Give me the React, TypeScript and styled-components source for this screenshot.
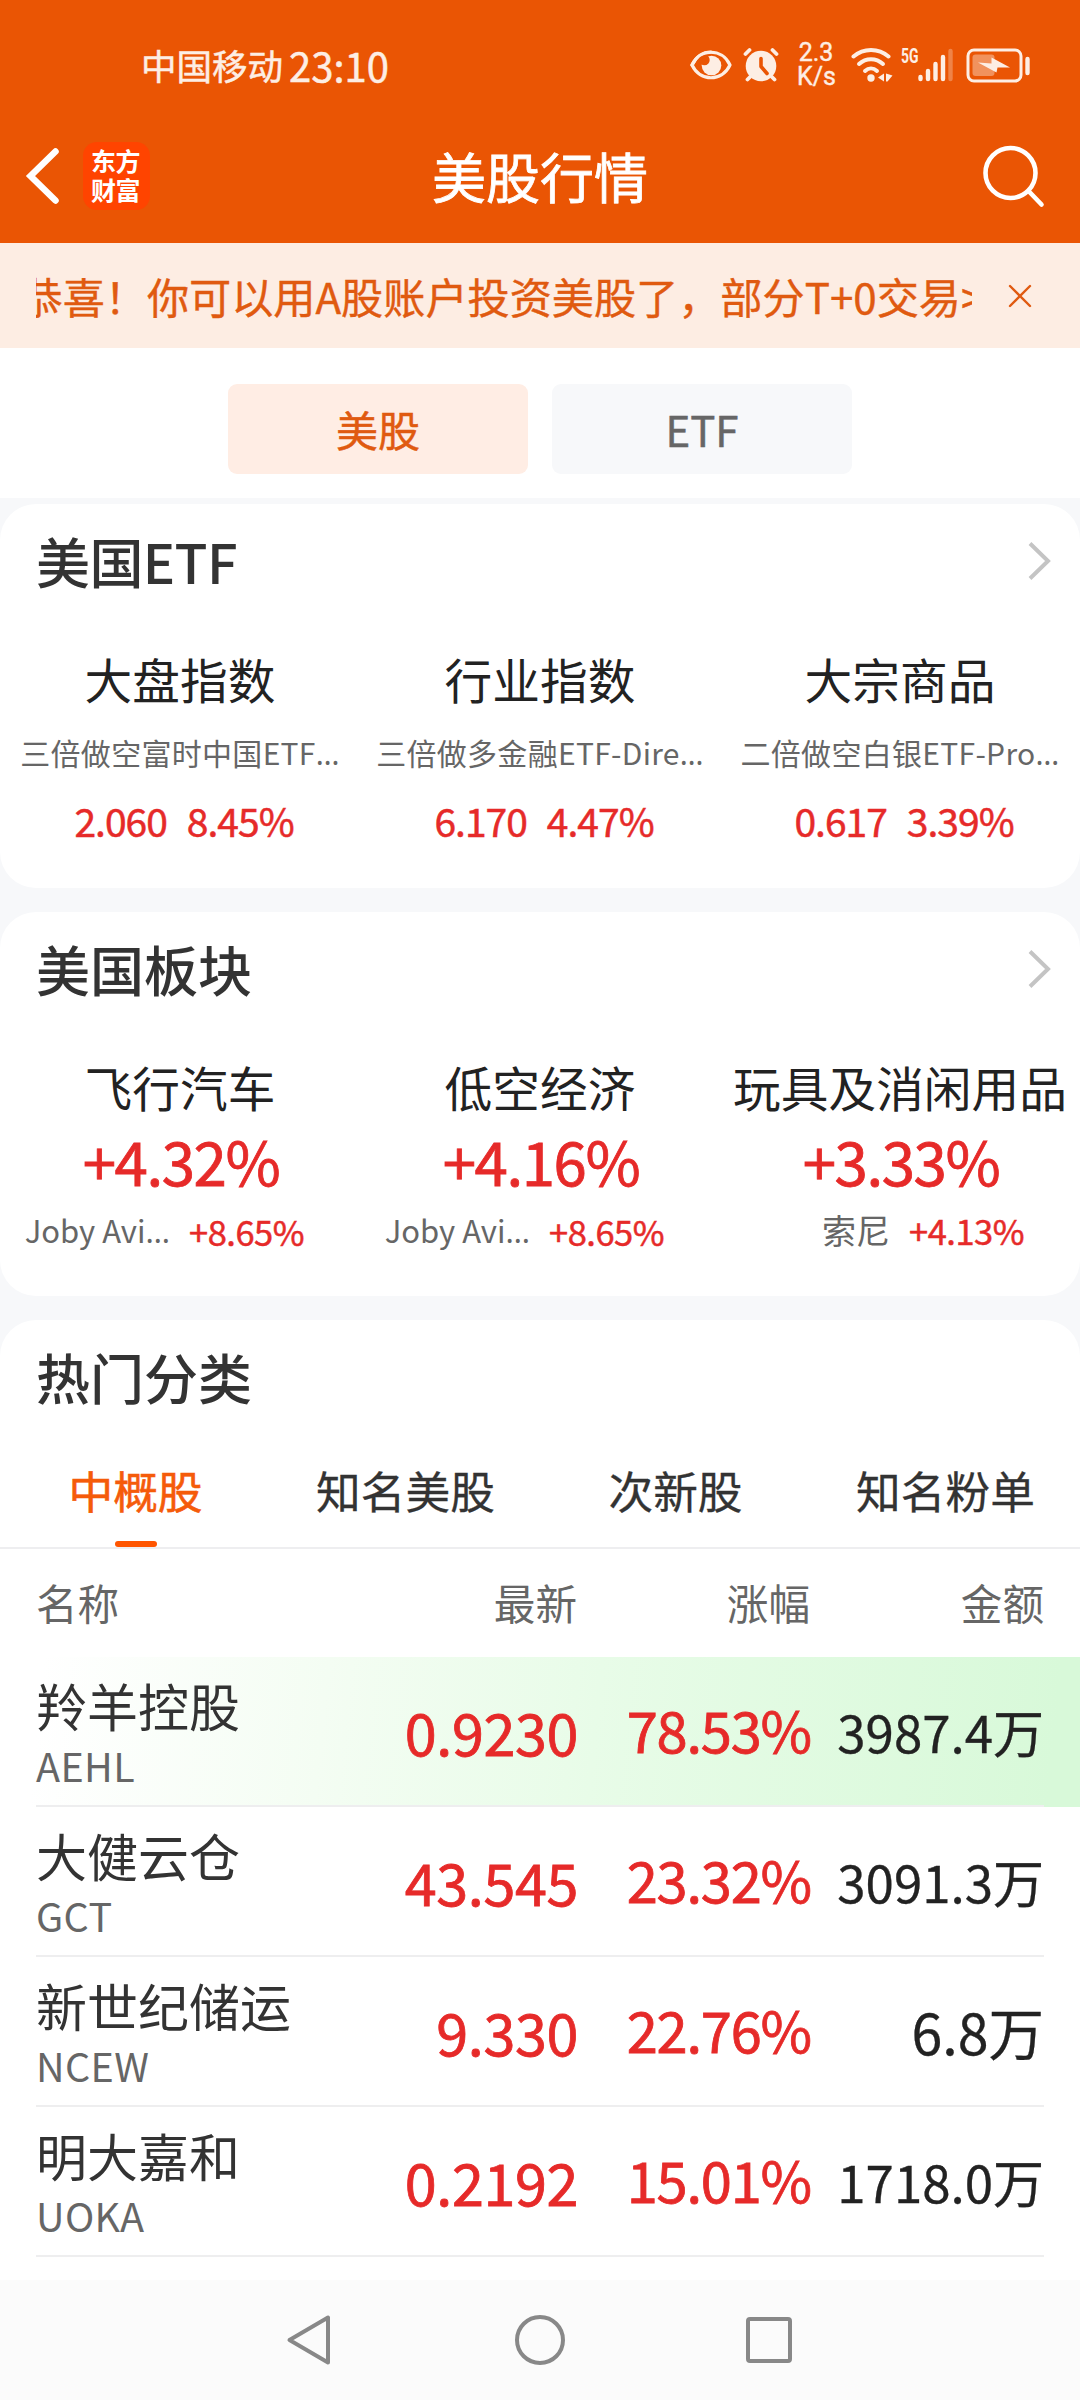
import React from "react";
import styled, { createGlobalStyle } from "styled-components";

const RED = "#e62a29";
const ICON = "#fdeee4";
const ORANGE = "#ea5504";

const Global = createGlobalStyle`
  * { box-sizing: border-box; }
  body {
    margin: 0;
    background: #f7f8fa;
    font-family: "Noto Sans CJK SC", "Noto Sans", sans-serif;
    color: #333;
  }
`;

const Screen = styled.div`
  width: 1080px;
  height: 2400px;
  overflow: hidden;
  display: flex;
  flex-direction: column;
`;

const Header = styled.header`
  height: 243px;
  flex: none;
  background: ${ORANGE};
  color: #fff;
`;

const StatusBar = styled.div`
  height: 127px;
  padding: 3px 49px 0 141px;
  display: flex;
  align-items: center;
  justify-content: space-between;
`;

const Carrier = styled.div`
  display: flex;
  align-items: center;
  gap: 6px;
  font-size: 35.5px;
  line-height: 40px;
  -webkit-text-stroke: 0.5px ${ICON};
  color: ${ICON};
`;

const Clock = styled.span`
  font-size: 40px;
`;

const StatusIcons = styled.div`
  display: flex;
  align-items: center;
  height: 50px;
`;

const StatusIcon = styled.svg<{ $gap: number }>`
  flex: none;
  display: block;
  margin-left: ${(p) => p.$gap}px;
`;

const Speed = styled.div`
  width: 38px;
  margin-left: 18px;
  font-family: Roboto, sans-serif;
  font-size: 25px;
  line-height: 24px;
  text-align: center;
  -webkit-text-stroke: 0.4px ${ICON};
  color: ${ICON};
`;

const NavRow = styled.div`
  height: 97px;
  padding: 0 35px 0 25px;
  display: grid;
  grid-template-columns: 1fr auto 1fr;
  align-items: center;
`;

const NavLeft = styled.div`
  display: flex;
  align-items: center;
  gap: 22px;
`;

const Logo = styled.div`
  width: 67px;
  height: 68px;
  padding: 4px 8px 0 8px;
  border-radius: 14px;
  background: #ff4400;
  font-size: 25px;
  font-weight: 700;
  line-height: 29px;
  letter-spacing: -0.4px;
`;

const PageTitle = styled.h1`
  margin: 0 -10px 0 0;
  font-size: 54px;
  font-weight: 400;
  line-height: 60px;
  -webkit-text-stroke: 0.8px #fff;
`;

const NavRight = styled.div`
  display: flex;
  justify-content: flex-end;
`;

const Notice = styled.div`
  height: 105px;
  flex: none;
  padding: 0 47px 0 36px;
  display: flex;
  align-items: center;
  justify-content: space-between;
  background: #fdede3;
`;

const Marquee = styled.div`
  width: 936px;
  overflow: hidden;
  white-space: nowrap;
  font-size: 42.15px;
  line-height: 64px;
  text-indent: -15.5px;
  -webkit-text-stroke: 0.4px #e05a10;
  color: #e05a10;
`;

const Segments = styled.div`
  height: 150px;
  flex: none;
  display: flex;
  justify-content: center;
  gap: 24px;
  padding-top: 36px;
  background: #fff;
`;

const Segment = styled.button<{ $active?: boolean }>`
  width: 300px;
  height: 90px;
  padding: 0;
  border: 0;
  border-radius: 9px;
  background: ${(p) => (p.$active ? "#ffede4" : "#f7f8fa")};
  color: ${(p) => (p.$active ? "#e05a10" : "#666")};
  font: 400 42px/90px "Noto Sans CJK SC", sans-serif;
  -webkit-text-stroke: 0.5px currentColor;
`;

const Card = styled.section<{ $top: number }>`
  height: 384px;
  flex: none;
  margin-top: ${(p) => p.$top}px;
  border-radius: 36px;
  background: #fff;
`;

const ListCard = styled(Card)`
  height: 960px;
  border-radius: 36px 36px 0 0;
`;

const CardHead = styled.div`
  height: 114px;
  padding: 0 29px 0 36px;
  display: flex;
  align-items: center;
  justify-content: space-between;
`;

const CardTitle = styled.h2<{ $tracking?: number }>`
  margin: 0;
  font-size: 54px;
  font-weight: 500;
  line-height: 60px;
  letter-spacing: ${(p) => p.$tracking ?? 0}px;
`;

const Columns = styled.div`
  display: grid;
  grid-template-columns: repeat(3, 360px);
`;

const Column = styled.div`
  display: flex;
  flex-direction: column;
  align-items: center;
  white-space: nowrap;
`;

const ColumnName = styled.div`
  margin-top: 30px;
  font-size: 47.7px;
  line-height: 62px;
  color: #222;
`;

const FundName = styled.div`
  margin-top: 20px;
  font-size: 30px;
  line-height: 44px;
  letter-spacing: 0.3px;
  color: #666;
`;

const Dots = styled.span`
  font-family: "Noto Sans", sans-serif;
`;

const FundQuote = styled.div`
  margin-top: 17px;
  padding-left: 8px;
  display: flex;
  gap: 20px;
  font-size: 39px;
  line-height: 54px;
  letter-spacing: -1px;
  -webkit-text-stroke: 0.5px ${RED};
  color: ${RED};
`;

const SectorChange = styled.div`
  margin-top: 7px;
  padding-left: 2px;
  font-size: 60px;
  line-height: 70px;
  letter-spacing: -1.4px;
  -webkit-text-stroke: 0.8px ${RED};
  color: ${RED};
`;

const Leader = styled.div`
  width: 360px;
  margin-top: 11px;
  display: grid;
  grid-template-columns: 170px 1fr;
  column-gap: 19px;
  align-items: center;
  line-height: 48px;
`;

const LeaderName = styled.span<{ $size: number }>`
  font-size: ${(p) => p.$size}px;
  text-align: right;
  color: #666;
`;

const LeaderChange = styled.span`
  font-size: 34.5px;
  letter-spacing: -0.5px;
  -webkit-text-stroke: 0.5px ${RED};
  color: ${RED};
`;

const Tabs = styled.div`
  height: 115px;
  display: grid;
  grid-template-columns: repeat(4, 270px);
  border-bottom: 2px solid #eeeef0;
`;

const Tab = styled.div<{ $active?: boolean }>`
  display: flex;
  flex-direction: column;
  align-items: center;
  justify-content: space-between;
  padding-top: 24px;
  padding-left: 1px;
  font-size: 44.7px;
  line-height: 64px;
  -webkit-text-stroke: ${(p) => (p.$active ? 0.6 : 0.3)}px currentColor;
  color: ${(p) => (p.$active ? "#f55b0a" : "#333")};
  &::after {
    content: "";
    width: 42px;
    height: 6px;
    border-radius: 3px;
    background: ${(p) => (p.$active ? "#ff5500" : "transparent")};
  }
`;

const Row = styled.div<{ $flash?: boolean }>`
  height: 150px;
  padding: 0 36px;
  background: ${(p) =>
    p.$flash ? "linear-gradient(96deg, #fff 4%, #f4fdf3 30%, #e8fce8 55%, #d8f9d9 97%)" : "#fff"};
`;

const RowGrid = styled.div`
  height: 150px;
  display: grid;
  grid-template-columns: 300px 242px 233px 1fr;
  align-items: center;
  border-bottom: 2px solid #eeeeef;
  white-space: nowrap;
`;

const HeadRow = styled.div`
  height: 108px;
  padding: 0 36px 3px;
  display: grid;
  grid-template-columns: 300px 241px 233px 1fr;
  align-items: center;
  font-size: 41.6px;
  line-height: 60px;
  color: #666;
`;

const HeadCell = styled.div<{ $left?: boolean }>`
  text-align: ${(p) => (p.$left ? "left" : "right")};
`;

const StockCell = styled.div`
  padding-top: 7px;
`;

const StockName = styled.div`
  font-size: 51px;
  line-height: 61px;
`;

const StockCode = styled.div`
  font-size: 39.5px;
  line-height: 58px;
  letter-spacing: 0.4px;
  color: #666;
`;

const Price = styled.div`
  text-align: right;
  font-size: 57.5px;
  line-height: 70px;
  letter-spacing: -0.4px;
  -webkit-text-stroke: 0.8px currentColor;
  color: ${RED};
`;

const Change = styled(Price)`
  padding-bottom: 5px;
  font-size: 56px;
  letter-spacing: -1.2px;
`;

const Amount = styled(Price)<{ $size: number }>`
  font-size: ${(p) => p.$size}px;
  letter-spacing: 0;
  -webkit-text-stroke: 0.3px currentColor;
  color: #222;
`;

const SystemNav = styled.nav`
  height: 120px;
  flex: none;
  padding: 0 287px 0 286px;
  display: flex;
  align-items: center;
  justify-content: space-between;
  background: #fbfbfb;
`;

const Chevron = () => (
  <svg width="24" height="40" viewBox="0 0 24 40" fill="none" stroke="#c4c4c4" strokeWidth="4">
    <path d="M3 2.500 21 20 3 37.500" />
  </svg>
);

const EyeIcon = () => (
  <StatusIcon $gap={0} width="42" height="30" viewBox="0 0 42 30">
    <path d="M2 15C10-2 32-2 40 15 32 32 10 32 2 15Z" fill="none" stroke={ICON} strokeWidth="3.200" strokeLinejoin="round" />
    <circle cx="21.500" cy="15.500" r="9.800" fill={ICON} />
    <circle cx="14.500" cy="10" r="5.200" fill={ORANGE} />
    <path d="M2 15C7 5 13.500 2 21 2" fill="none" stroke={ICON} strokeWidth="3.200" strokeLinecap="round" />
  </StatusIcon>
);

const AlarmIcon = () => (
  <StatusIcon $gap={11} width="36" height="36" viewBox="0 0 36 36">
    <circle cx="18" cy="19" r="15.300" fill={ICON} />
    <path d="M2.500 7 6.500 3M33.500 7 29.500 3M7 30 4.500 32.500M29 30l2.500 2.500" stroke={ICON} strokeWidth="3.800" strokeLinecap="round" />
    <path d="M18 11.500v8l6 7" fill="none" stroke={ORANGE} strokeWidth="3.600" strokeLinecap="round" strokeLinejoin="round" />
  </StatusIcon>
);

const WifiIcon = () => (
  <StatusIcon $gap={16} width="42" height="36" viewBox="0 0 42 36">
    <g fill="none" stroke={ICON} strokeWidth="4" strokeLinecap="round">
      <path d="M2.500 9.500c10-8.700 25-8.700 35 0" />
      <path d="M8 17c7-6.500 17-6.500 24 0" />
      <path d="M14 24c3.700-3.500 8.300-3.500 12 0" />
    </g>
    <circle cx="20" cy="31" r="3.700" fill={ICON} />
    <path d="M33 26.500v8l-6-4ZM35 26.500l6.500 2-5 6H35Z" fill={ICON} />
  </StatusIcon>
);

const SignalIcon = () => (
  <StatusIcon $gap={7} width="54" height="36" viewBox="0 0 54 36">
    <text x="1" y="16" fontFamily="Roboto, sans-serif" fontWeight="700" fontSize="20.500" fill={ICON} textLength="17.500" lengthAdjust="spacingAndGlyphs">
      5G
    </text>
    <g stroke={ICON} strokeWidth="4.400" strokeLinecap="round">
      <path d="M20.500 30v2M28 24v8M35.500 17v15M43 10v22" />
      <path d="M50.500 4v28" opacity=".3" />
    </g>
  </StatusIcon>
);

const BatteryIcon = () => (
  <StatusIcon $gap={11} width="66" height="36" viewBox="0 0 66 36">
    <rect x="3" y="3" width="53" height="31" rx="6" fill="none" stroke={ICON} strokeWidth="3" />
    <rect x="7.500" y="7.500" width="22" height="21.500" rx="3" fill={ICON} opacity=".4" />
    <path d="M13 15.500 26.500 16.500V10.500L45 20.500 32.500 20.500 31.500 25.500Z" fill={ICON} />
    <path d="M62.500 12v14" stroke={ICON} strokeWidth="4.400" strokeLinecap="round" />
  </StatusIcon>
);

const funds = [
  { name: "大盘指数", fund: "三倍做空富时中国ETF", price: "2.060", change: "8.45%" },
  { name: "行业指数", fund: "三倍做多金融ETF-Dire", price: "6.170", change: "4.47%" },
  { name: "大宗商品", fund: "二倍做空白银ETF-Pro", price: "0.617", change: "3.39%" },
];

const sectors = [
  { name: "飞行汽车", change: "+4.32%", leader: "Joby Avi", cut: true, leaderChange: "+8.65%" },
  { name: "低空经济", change: "+4.16%", leader: "Joby Avi", cut: true, leaderChange: "+8.65%" },
  { name: "玩具及消闲用品", change: "+3.33%", leader: "索尼", cut: false, leaderChange: "+4.13%" },
];

const stocks = [
  { name: "羚羊控股", code: "AEHL", price: "0.9230", change: "78.53%", amount: "3987.4万" },
  { name: "大健云仓", code: "GCT", price: "43.545", change: "23.32%", amount: "3091.3万" },
  { name: "新世纪储运", code: "NCEW", price: "9.330", change: "22.76%", amount: "6.8万" },
  { name: "明大嘉和", code: "UOKA", price: "0.2192", change: "15.01%", amount: "1718.0万" },
];

const tabs = ["中概股", "知名美股", "次新股", "知名粉单"];

export default function App() {
  return (
    <Screen>
      <Global />
      <Header>
        <StatusBar>
          <Carrier>
            <span>中国移动</span>
            <Clock>23:10</Clock>
          </Carrier>
          <StatusIcons>
            <EyeIcon />
            <AlarmIcon />
            <Speed>
              2.3
              <br />
              K/s
            </Speed>
            <WifiIcon />
            <SignalIcon />
            <BatteryIcon />
          </StatusIcons>
        </StatusBar>
        <NavRow>
          <NavLeft>
            <svg width="36" height="58" viewBox="0 0 36 58" fill="none" stroke="#fff" strokeWidth="6.500" strokeLinecap="round">
              <path d="M30.500 4.500 5.500 29 30.500 53.500" />
            </svg>
            <Logo>东方财富</Logo>
          </NavLeft>
          <PageTitle>美股行情</PageTitle>
          <NavRight>
            <svg width="62" height="64" viewBox="0 0 62 64" fill="none" stroke="#fff" strokeWidth="4.600" strokeLinecap="round">
              <circle cx="27.500" cy="29" r="25" />
              <path d="m46 47.500 12.500 13" />
            </svg>
          </NavRight>
        </NavRow>
      </Header>

      <Notice>
        <Marquee>恭喜！你可以用A股账户投资美股了，部分T+0交易&gt;&gt;</Marquee>
        <svg width="26" height="26" viewBox="0 0 26 26" stroke="#e05a10" strokeWidth="2.400" strokeLinecap="round">
          <path d="m3 3 20 20M23 3 3 23" />
        </svg>
      </Notice>

      <Segments>
        <Segment $active>美股</Segment>
        <Segment>ETF</Segment>
      </Segments>

      <Card $top={6}>
        <CardHead>
          <CardTitle $tracking={-0.6}>美国ETF</CardTitle>
          <Chevron />
        </CardHead>
        <Columns>
          {funds.map((f) => (
            <Column key={f.name}>
              <ColumnName>{f.name}</ColumnName>
              <FundName>
                {f.fund}
                <Dots>…</Dots>
              </FundName>
              <FundQuote>
                <span>{f.price}</span>
                <span>{f.change}</span>
              </FundQuote>
            </Column>
          ))}
        </Columns>
      </Card>

      <Card $top={24}>
        <CardHead>
          <CardTitle>美国板块</CardTitle>
          <Chevron />
        </CardHead>
        <Columns>
          {sectors.map((s) => (
            <Column key={s.name}>
              <ColumnName>{s.name}</ColumnName>
              <SectorChange>{s.change}</SectorChange>
              <Leader>
                <LeaderName $size={s.cut ? 31 : 34}>
                  {s.leader}
                  {s.cut && <Dots>…</Dots>}
                </LeaderName>
                <LeaderChange>{s.leaderChange}</LeaderChange>
              </Leader>
            </Column>
          ))}
        </Columns>
      </Card>

      <ListCard $top={24}>
        <CardHead>
          <CardTitle>热门分类</CardTitle>
        </CardHead>
        <Tabs>
          {tabs.map((t, i) => (
            <Tab key={t} $active={i === 0}>
              {t}
            </Tab>
          ))}
        </Tabs>
        <HeadRow>
          <HeadCell $left>名称</HeadCell>
          <HeadCell>最新</HeadCell>
          <HeadCell>涨幅</HeadCell>
          <HeadCell>金额</HeadCell>
        </HeadRow>
        {stocks.map((s, i) => (
          <Row key={s.code} $flash={i === 0}>
            <RowGrid>
              <StockCell>
                <StockName>{s.name}</StockName>
                <StockCode>{s.code}</StockCode>
              </StockCell>
              <Price>{s.price}</Price>
              <Change>{s.change}</Change>
              <Amount $size={s.amount.length > 6 ? 51 : 55.5}>{s.amount}</Amount>
            </RowGrid>
          </Row>
        ))}
      </ListCard>

      <SystemNav>
        <svg width="48" height="54" viewBox="0 0 48 54" fill="none" stroke="#888" strokeWidth="4" strokeLinejoin="round">
          <path d="M42 4.500v45L3.500 27Z" />
        </svg>
        <svg width="52" height="52" viewBox="0 0 52 52" fill="none" stroke="#888" strokeWidth="4">
          <circle cx="26" cy="26" r="23" />
        </svg>
        <svg width="48" height="48" viewBox="0 0 48 48" fill="none" stroke="#888" strokeWidth="4">
          <rect x="3" y="3" width="42" height="42" rx="2" />
        </svg>
      </SystemNav>
    </Screen>
  );
}
